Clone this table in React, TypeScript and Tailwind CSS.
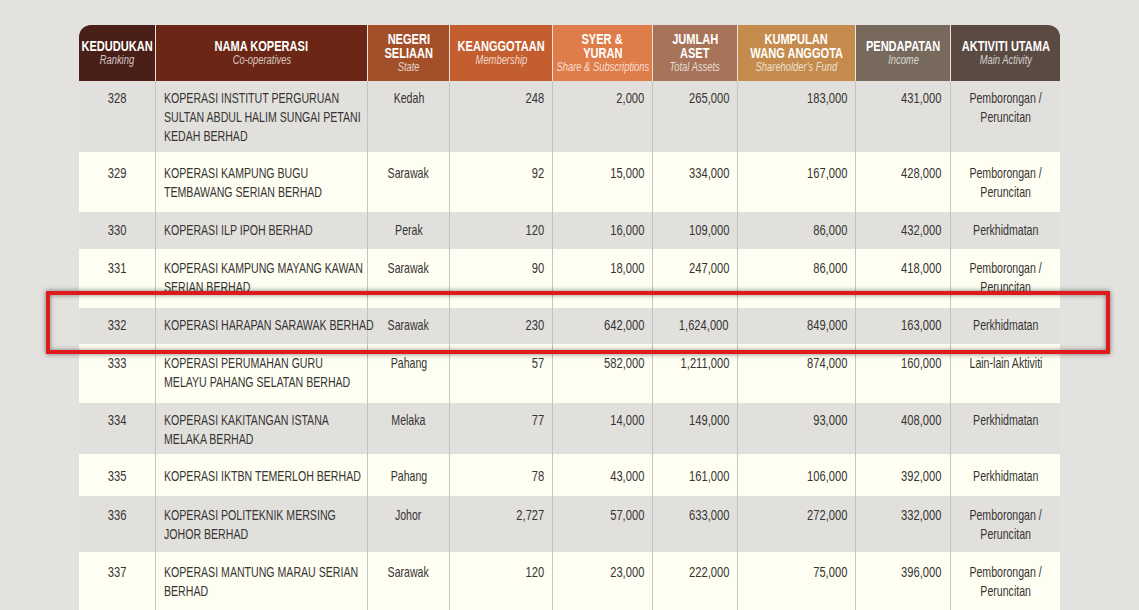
import React from "react";

type Row = {
  rank: string;
  name: string[];
  state: string;
  mem: string;
  syer: string;
  aset: string;
  fund: string;
  income: string;
  act: string[];
  cls: string;
};

const G = "bg-[#e2e0dd]";
const C = "bg-[#fffef2]";

const rows: Row[] = [
  { rank: "328", name: ["KOPERASI INSTITUT PERGURUAN", "SULTAN ABDUL HALIM SUNGAI PETANI", "KEDAH BERHAD"], state: "Kedah", mem: "248", syer: "2,000", aset: "265,000", fund: "183,000", income: "431,000", act: ["Pemborongan /", "Peruncitan"], cls: `${G} h-[71px] *:pt-[8px]` },
  { rank: "329", name: ["KOPERASI KAMPUNG BUGU", "TEMBAWANG SERIAN BERHAD"], state: "Sarawak", mem: "92", syer: "15,000", aset: "334,000", fund: "167,000", income: "428,000", act: ["Pemborongan /", "Peruncitan"], cls: `${C} h-[60px] *:pt-[12px]` },
  { rank: "330", name: ["KOPERASI ILP IPOH BERHAD"], state: "Perak", mem: "120", syer: "16,000", aset: "109,000", fund: "86,000", income: "432,000", act: ["Perkhidmatan"], cls: `${G} h-[37px] *:pt-[9px]` },
  { rank: "331", name: ["KOPERASI KAMPUNG MAYANG KAWAN", "SERIAN BERHAD"], state: "Sarawak", mem: "90", syer: "18,000", aset: "247,000", fund: "86,000", income: "418,000", act: ["Pemborongan /", "Peruncitan"], cls: `${C} h-[59px] *:pt-[10px]` },
  { rank: "332", name: ["KOPERASI HARAPAN SARAWAK BERHAD"], state: "Sarawak", mem: "230", syer: "642,000", aset: "1,624,000", fund: "849,000", income: "163,000", act: ["Perkhidmatan"], cls: `${G} h-[36px] *:pt-[8px]` },
  { rank: "333", name: ["KOPERASI PERUMAHAN GURU", "MELAYU PAHANG SELATAN BERHAD"], state: "Pahang", mem: "57", syer: "582,000", aset: "1,211,000", fund: "874,000", income: "160,000", act: ["Lain-lain Aktiviti"], cls: `${C} h-[59px] *:pt-[10px]` },
  { rank: "334", name: ["KOPERASI KAKITANGAN ISTANA", "MELAKA BERHAD"], state: "Melaka", mem: "77", syer: "14,000", aset: "149,000", fund: "93,000", income: "408,000", act: ["Perkhidmatan"], cls: `${G} h-[51px] *:pt-[8px]` },
  { rank: "335", name: ["KOPERASI IKTBN TEMERLOH BERHAD"], state: "Pahang", mem: "78", syer: "43,000", aset: "161,000", fund: "106,000", income: "392,000", act: ["Perkhidmatan"], cls: `${C} h-[42px] *:pt-[13px]` },
  { rank: "336", name: ["KOPERASI POLITEKNIK MERSING", "JOHOR BERHAD"], state: "Johor", mem: "2,727", syer: "57,000", aset: "633,000", fund: "272,000", income: "332,000", act: ["Pemborongan /", "Peruncitan"], cls: `${G} h-[56px] *:pt-[10px]` },
  { rank: "337", name: ["KOPERASI MANTUNG MARAU SERIAN", "BERHAD"], state: "Sarawak", mem: "120", syer: "23,000", aset: "222,000", fund: "75,000", income: "396,000", act: ["Pemborongan /", "Peruncitan"], cls: `${C} h-[60px] *:pt-[11px]` },
];

const headers = [
  { t: ["KEDUDUKAN"], s: "Ranking", bg: "bg-[#4a1f17] rounded-tl-[12px]" },
  { t: ["NAMA KOPERASI"], s: "Co-operatives", bg: "bg-[#6b2616]" },
  { t: ["NEGERI", "SELIAAN"], s: "State", bg: "bg-[#a3502a]" },
  { t: ["KEANGGOTAAN"], s: "Membership", bg: "bg-[#c55e2e]" },
  { t: ["SYER &", "YURAN"], s: "Share & Subscriptions", bg: "bg-[#df7d4a]" },
  { t: ["JUMLAH", "ASET"], s: "Total Assets", bg: "bg-[#a77459]" },
  { t: ["KUMPULAN", "WANG ANGGOTA"], s: "Shareholder's Fund", bg: "bg-[#c48b4c]" },
  { t: ["PENDAPATAN"], s: "Income", bg: "bg-[#776a5d]" },
  { t: ["AKTIVITI UTAMA"], s: "Main Activity", bg: "bg-[#5a4a42] rounded-tr-[12px]" },
];

const cols = "grid grid-cols-[76px_212px_82px_103px_100px_85px_118px_95px_110px]";
const font = "font-['Liberation_Sans','Arial',sans-serif]";

const TXT = "scale-x-[0.73]";
const NUM = "scale-x-[0.77]";

function N({ children, o, s }: { children: React.ReactNode; o: "l" | "c" | "r"; s: string }) {
  const origin = o === "l" ? "origin-left" : o === "r" ? "origin-right" : "origin-center";
  return <span className={`inline-block whitespace-nowrap ${s} ${origin}`}>{children}</span>;
}

const cell = "border-l border-[#c6c4c1]";

export default function App() {
  return (
    <div className={`relative w-[1139px] h-[610px] overflow-hidden bg-[#e4e2df] pt-[25px] pl-[79px] ${font}`}>
      <div className="w-[981px]">
        <div className={`${cols} h-[56px]`}>
          {headers.map((h, i) => (
            <div
              key={i}
              className={`${h.bg} flex flex-col items-center justify-center text-center ${i > 0 ? "border-l border-[#efe4dc]" : ""}`}
            >
              {h.t.map((l, j) => (
                <div key={j} className="text-white font-bold text-[14px] leading-[14px]">
                  <N o="c" s="scale-x-[0.79]">{l}</N>
                </div>
              ))}
              <div className="text-white/75 italic text-[12.5px] leading-[15px]">
                <N o="c" s="scale-x-[0.75]">{h.s}</N>
              </div>
            </div>
          ))}
        </div>
        {rows.map((r) => (
          <div key={r.rank} className={`${cols} ${r.cls} text-[14.5px] leading-[19px] text-[#353432]`}>
            <div className="text-center">
              <N o="c" s={NUM}>{r.rank}</N>
            </div>
            <div className={`${cell} pl-2`}>
              {r.name.map((l, j) => (
                <div key={j}>
                  <N o="l" s={TXT}>{l}</N>
                </div>
              ))}
            </div>
            <div className={`${cell} text-center`}>
              <N o="c" s={TXT}>{r.state}</N>
            </div>
            <div className={`${cell} text-right pr-2`}>
              <N o="r" s={NUM}>{r.mem}</N>
            </div>
            <div className={`${cell} text-right pr-2`}>
              <N o="r" s={NUM}>{r.syer}</N>
            </div>
            <div className={`${cell} text-right pr-2`}>
              <N o="r" s={NUM}>{r.aset}</N>
            </div>
            <div className={`${cell} text-right pr-2`}>
              <N o="r" s={NUM}>{r.fund}</N>
            </div>
            <div className={`${cell} text-right pr-[9px]`}>
              <N o="r" s={NUM}>{r.income}</N>
            </div>
            <div className={`${cell} text-center`}>
              {r.act.map((l, j) => (
                <div key={j}>
                  <N o="c" s={TXT}>{l}</N>
                </div>
              ))}
            </div>
          </div>
        ))}
      </div>
      <div className="absolute left-[46px] top-[291px] w-[1064px] h-[63px] border-[4px] border-[#df1a1c] shadow-[0_0_5px_rgba(0,0,0,0.5),inset_0_0_5px_rgba(0,0,0,0.45)]" />
    </div>
  );
}
